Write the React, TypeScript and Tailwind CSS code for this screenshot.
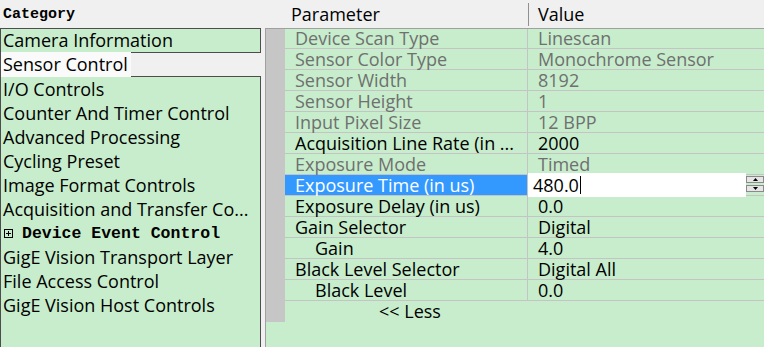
import { Fragment } from "react"

const categories = [
  "I/O Controls",
  "Counter And Timer Control",
  "Advanced Processing",
  "Cycling Preset",
  "Image Format Controls",
  "Acquisition and Transfer Co...",
]

const moreCategories = ["GigE Vision Transport Layer", "File Access Control", "GigE Vision Host Controls"]

type Param = { name: string; value: string; disabled?: boolean; indent?: boolean; selected?: boolean }

const params: Param[] = [
  { name: "Device Scan Type", value: "Linescan", disabled: true },
  { name: "Sensor Color Type", value: "Monochrome Sensor", disabled: true },
  { name: "Sensor Width", value: "8192", disabled: true },
  { name: "Sensor Height", value: "1", disabled: true },
  { name: "Input Pixel Size", value: "12 BPP", disabled: true },
  { name: "Acquisition Line Rate (in ...", value: "2000" },
  { name: "Exposure Mode", value: "Timed", disabled: true },
  { name: "Exposure Time (in us)", value: "480.0", selected: true },
  { name: "Exposure Delay (in us)", value: "0.0" },
  { name: "Gain Selector", value: "Digital" },
  { name: "Gain", value: "4.0", indent: true },
  { name: "Black Level Selector", value: "Digital All" },
  { name: "Black Level", value: "0.0", indent: true },
]

const SpinArrow = ({ up }: { up?: boolean }) => (
  <svg width="5" height="3" viewBox="0 0 5 3">
    {up ? <path d="M2.5 0 L5 3 L0 3 Z" fill="#000" /> : <path d="M0 0 L5 0 L2.5 3 Z" fill="#000" />}
  </svg>
)

const ParamRow = ({ p, first }: { p: Param; first: boolean }) => {
  const color = p.disabled ? "text-[#707070]" : "text-black"
  return (
    <div className={first ? "h-[20px] flex" : "h-[21px] flex"}>
      <div className="w-[19px] bg-[#c6c6c6]" />
      <div
        className={
          p.selected
            ? "w-[243px] flex items-center border-b border-r border-[#c4c4c4] bg-[#3399ff] text-white"
            : `w-[243px] flex items-center border-b border-r border-[#c4c4c4] ${color}`
        }
      >
        <span className={p.indent ? "pl-[30px] whitespace-nowrap" : "pl-[10px] whitespace-nowrap"}>{p.name}</span>
      </div>
      <div className={`relative flex-1 flex items-center border-b border-[#c4c4c4] ${color}`}>
        {p.selected ? (
          <div className="absolute left-0 right-0 top-[-2px] h-[24px] flex">
            <div className="flex-1 bg-white flex items-center pl-[5px] text-black">
              <span>{p.value}</span>
              <span className="w-px h-[18px] bg-black ml-[1px]" />
            </div>
            <div className="w-[18px] flex flex-col gap-[2px] pt-[3px]">
              <div className="h-[7px] bg-[#e6e6e6] border border-[#8a8a8a] flex items-center justify-center">
                <SpinArrow up />
              </div>
              <div className="h-[7px] bg-[#e6e6e6] border border-[#8a8a8a] flex items-center justify-center">
                <SpinArrow />
              </div>
            </div>
          </div>
        ) : (
          <span className="pl-[10px] whitespace-nowrap">{p.value}</span>
        )}
      </div>
    </div>
  )
}

export default function App() {
  return (
    <div className="w-[764px] h-[347px] overflow-hidden bg-[#f0f0f0] flex font-['Open_Sans','Noto_Sans',sans-serif] text-[18px] leading-[19px] text-black">
      {/* category tree */}
      <div className="w-[261px] flex flex-col">
        <div className="h-[28px] pl-[3px] flex items-center font-['Liberation_Mono',monospace] font-bold text-[15px]">
          Category
        </div>
        <div className="h-[24px] bg-[#c7edcc] border-t border-x border-[#4d4d4d] pl-[2px] flex items-center whitespace-nowrap">
          Camera Information
        </div>
        <div className="h-[25px] flex">
          <div className="bg-[#fafafa] border-l border-[#4d4d4d] pl-[2px] pr-[3px] flex items-center whitespace-nowrap">
            Sensor Control
          </div>
          <div className="flex-1 border-y border-[#4d4d4d]" />
        </div>
        <div className="flex-1 bg-[#c7edcc] border-x border-[#4d4d4d] flex flex-col">
          {categories.map(c => (
            <div key={c} className="h-[24px] pl-[2px] flex items-center whitespace-nowrap">
              {c}
            </div>
          ))}
          <div className="h-[24px] pl-[3px] flex items-center gap-[9px] whitespace-nowrap">
            <svg width="9" height="9" viewBox="0 0 9 9">
              <rect x="0.5" y="0.5" width="8" height="8" fill="none" stroke="#000" />
              <path d="M2 4.5 H7 M4.5 2 V7" stroke="#000" />
            </svg>
            <span className="font-['Liberation_Mono',monospace] font-bold text-[16.5px]">Device Event Control</span>
          </div>
          {moreCategories.map(c => (
            <div key={c} className="h-[24px] pl-[2px] flex items-center whitespace-nowrap">
              {c}
            </div>
          ))}
        </div>
      </div>

      <div className="w-[4px]" />

      {/* parameter grid */}
      <div className="flex-1 flex flex-col">
        <div className="h-[29px] border-b border-[#a0a0a0] flex items-center">
          <div className="w-[263px] pl-[26px] flex items-center">Parameter</div>
          <div className="w-px h-[23px] bg-[#909090]" />
          <div className="pl-[9px]">Value</div>
        </div>
        <div className="flex-1 bg-[#c7edcc] border-l border-[#a0a0a0] flex flex-col">
          {params.map((p, i) => (
            <Fragment key={p.name}>
              <ParamRow p={p} first={i === 0} />
            </Fragment>
          ))}
          <div className="h-[21px] flex">
            <div className="w-[19px] bg-[#c6c6c6]" />
            <div className="pl-[94px] flex items-center">&lt;&lt; Less</div>
          </div>
        </div>
      </div>
    </div>
  )
}
